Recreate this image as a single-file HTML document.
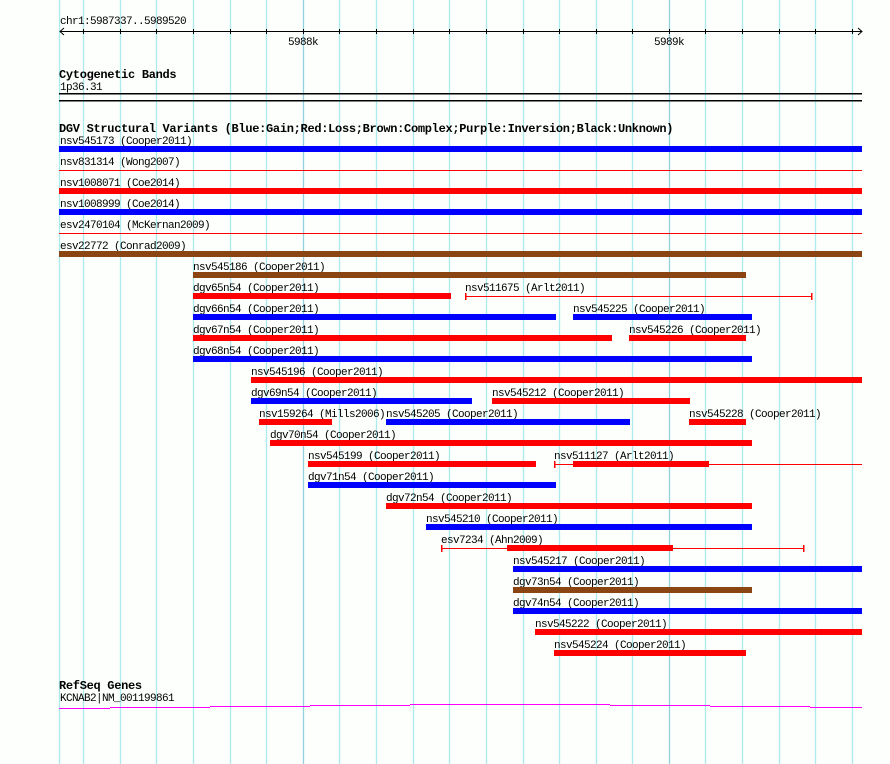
<!DOCTYPE html>
<html><head><meta charset="utf-8"><style>
html,body{margin:0;padding:0;background:#fcfffc;}
svg{display:block}
text{font-family:"Liberation Mono",monospace;font-size:11px;letter-spacing:-0.6px;fill:#000}
.b{font-weight:bold;font-size:12px;letter-spacing:-0.3px}
</style></head><body>
<svg width="890" height="764" viewBox="0 0 890 764" xmlns="http://www.w3.org/2000/svg">
<rect width="890" height="764" fill="#fcfffc"/>
<g stroke="#aee9ee" stroke-width="1.3">
<line x1="59.5" y1="0" x2="59.5" y2="764"/><line x1="83.5" y1="0" x2="83.5" y2="764"/><line x1="120.5" y1="0" x2="120.5" y2="764"/><line x1="156.5" y1="0" x2="156.5" y2="764"/><line x1="193.5" y1="0" x2="193.5" y2="764"/><line x1="230.5" y1="0" x2="230.5" y2="764"/><line x1="266.5" y1="0" x2="266.5" y2="764"/><line x1="339.5" y1="0" x2="339.5" y2="764"/><line x1="376.5" y1="0" x2="376.5" y2="764"/><line x1="413.5" y1="0" x2="413.5" y2="764"/><line x1="449.5" y1="0" x2="449.5" y2="764"/><line x1="486.5" y1="0" x2="486.5" y2="764"/><line x1="523.5" y1="0" x2="523.5" y2="764"/><line x1="559.5" y1="0" x2="559.5" y2="764"/><line x1="596.5" y1="0" x2="596.5" y2="764"/><line x1="632.5" y1="0" x2="632.5" y2="764"/><line x1="705.5" y1="0" x2="705.5" y2="764"/><line x1="742.5" y1="0" x2="742.5" y2="764"/><line x1="779.5" y1="0" x2="779.5" y2="764"/><line x1="815.5" y1="0" x2="815.5" y2="764"/><line x1="852.5" y1="0" x2="852.5" y2="764"/>
</g>
<g stroke="#96cfe0" stroke-width="1.3"><line x1="303.5" y1="0" x2="303.5" y2="764"/><line x1="669.5" y1="0" x2="669.5" y2="764"/></g>

<text x="60" y="24">chr1:5987337..5989520</text>
<g stroke="#000" stroke-width="1" fill="none">
<line x1="60" y1="31.5" x2="862" y2="31.5"/>
<polyline points="64,28 60,31.5 64,35"/><polyline points="858,28 862,31.5 858,35"/>
<path d="M83.5 29v5M120.5 29v5M156.5 29v5M193.5 29v5M230.5 29v5M266.5 29v5M303.5 29v5M339.5 29v5M376.5 29v5M413.5 29v5M449.5 29v5M486.5 29v5M523.5 29v5M559.5 29v5M596.5 29v5M632.5 29v5M669.5 29v5M705.5 29v5M742.5 29v5M779.5 29v5M815.5 29v5M852.5 29v5"/>
</g>
<text x="288" y="45">5988k</text><text x="654" y="45">5989k</text>

<text class="b" x="59" y="78">Cytogenetic Bands</text>
<text x="60" y="90">1p36.31</text>
<rect x="59" y="93" width="803" height="1.5" fill="#000"/>
<rect x="59" y="100" width="803" height="1.5" fill="#000"/>

<text class="b" x="59" y="132">DGV Structural Variants (Blue:Gain;Red:Loss;Brown:Complex;Purple:Inversion;Black:Unknown)</text>

<g>
<text x="60" y="144">nsv545173 (Cooper2011)</text><rect x="59" y="146" width="803" height="6" fill="#0000ff"/>
<text x="60" y="165">nsv831314 (Wong2007)</text><rect x="59" y="170" width="803" height="1" fill="#ff0000"/>
<text x="60" y="186">nsv1008071 (Coe2014)</text><rect x="59" y="188" width="803" height="6" fill="#ff0000"/>
<text x="60" y="207">nsv1008999 (Coe2014)</text><rect x="59" y="209" width="803" height="6" fill="#0000ff"/>
<text x="60" y="228">esv2470104 (McKernan2009)</text><rect x="59" y="233" width="803" height="1" fill="#ff0000"/>
<text x="60" y="249">esv22772 (Conrad2009)</text><rect x="59" y="251" width="803" height="6" fill="#8b4513"/>

<text x="193" y="270">nsv545186 (Cooper2011)</text><rect x="193" y="272" width="553" height="6" fill="#8b4513"/>

<text x="193" y="291">dgv65n54 (Cooper2011)</text><rect x="193" y="293" width="258" height="6" fill="#ff0000"/>
<text x="465" y="291">nsv511675 (Arlt2011)</text><rect x="465" y="296" width="347" height="1" fill="#ff0000"/><rect x="465" y="293" width="1.5" height="7" fill="#ff0000"/><rect x="811" y="293" width="1.5" height="7" fill="#ff0000"/>

<text x="193" y="312">dgv66n54 (Cooper2011)</text><rect x="193" y="314" width="363" height="6" fill="#0000ff"/>
<text x="573" y="312">nsv545225 (Cooper2011)</text><rect x="573" y="314" width="179" height="6" fill="#0000ff"/>

<text x="193" y="333">dgv67n54 (Cooper2011)</text><rect x="193" y="335" width="419" height="6" fill="#ff0000"/>
<text x="629" y="333">nsv545226 (Cooper2011)</text><rect x="629" y="335" width="117" height="6" fill="#ff0000"/>

<text x="193" y="354">dgv68n54 (Cooper2011)</text><rect x="193" y="356" width="559" height="6" fill="#0000ff"/>

<text x="251" y="375">nsv545196 (Cooper2011)</text><rect x="251" y="377" width="611" height="6" fill="#ff0000"/>

<text x="251" y="396">dgv69n54 (Cooper2011)</text><rect x="251" y="398" width="221" height="6" fill="#0000ff"/>
<text x="492" y="396">nsv545212 (Cooper2011)</text><rect x="492" y="398" width="198" height="6" fill="#ff0000"/>

<text x="259" y="417">nsv159264 (Mills2006)</text><rect x="259" y="419" width="73" height="6" fill="#ff0000"/>
<text x="386" y="417">nsv545205 (Cooper2011)</text><rect x="386" y="419" width="244" height="6" fill="#0000ff"/>
<text x="689" y="417">nsv545228 (Cooper2011)</text><rect x="689" y="419" width="57" height="6" fill="#ff0000"/>

<text x="270" y="438">dgv70n54 (Cooper2011)</text><rect x="270" y="440" width="482" height="6" fill="#ff0000"/>

<text x="308" y="459">nsv545199 (Cooper2011)</text><rect x="308" y="461" width="228" height="6" fill="#ff0000"/>
<text x="554" y="459">nsv511127 (Arlt2011)</text><rect x="554" y="464" width="308" height="1" fill="#ff0000"/><rect x="554" y="461" width="1.5" height="7" fill="#ff0000"/><rect x="573" y="461" width="136" height="6" fill="#ff0000"/>

<text x="308" y="480">dgv71n54 (Cooper2011)</text><rect x="308" y="482" width="248" height="6" fill="#0000ff"/>

<text x="386" y="501">dgv72n54 (Cooper2011)</text><rect x="386" y="503" width="366" height="6" fill="#ff0000"/>

<text x="426" y="522">nsv545210 (Cooper2011)</text><rect x="426" y="524" width="326" height="6" fill="#0000ff"/>

<text x="441" y="543">esv7234 (Ahn2009)</text><rect x="441" y="548" width="363" height="1" fill="#ff0000"/><rect x="441" y="545" width="1.5" height="7" fill="#ff0000"/><rect x="803" y="545" width="1.5" height="7" fill="#ff0000"/><rect x="507" y="545" width="166" height="6" fill="#ff0000"/>

<text x="513" y="564">nsv545217 (Cooper2011)</text><rect x="513" y="566" width="349" height="6" fill="#0000ff"/>
<text x="513" y="585">dgv73n54 (Cooper2011)</text><rect x="513" y="587" width="239" height="6" fill="#8b4513"/>
<text x="513" y="606">dgv74n54 (Cooper2011)</text><rect x="513" y="608" width="349" height="6" fill="#0000ff"/>
<text x="535" y="627">nsv545222 (Cooper2011)</text><rect x="535" y="629" width="327" height="6" fill="#ff0000"/>
<text x="554" y="648">nsv545224 (Cooper2011)</text><rect x="554" y="650" width="192" height="6" fill="#ff0000"/>
</g>

<text class="b" x="59" y="689">RefSeq Genes</text>
<text x="60" y="701">KCNAB2|NM_001199861</text>
<g fill="#ff00ff">
<rect x="59" y="708" width="51" height="1"/>
<rect x="110" y="707" width="100" height="1"/>
<rect x="210" y="706" width="100" height="1"/>
<rect x="310" y="705" width="100" height="1"/>
<rect x="410" y="704" width="200" height="1"/>
<rect x="610" y="705" width="100" height="1"/>
<rect x="710" y="706" width="100" height="1"/>
<rect x="810" y="707" width="52" height="1"/>
</g>
</svg>
</body></html>
